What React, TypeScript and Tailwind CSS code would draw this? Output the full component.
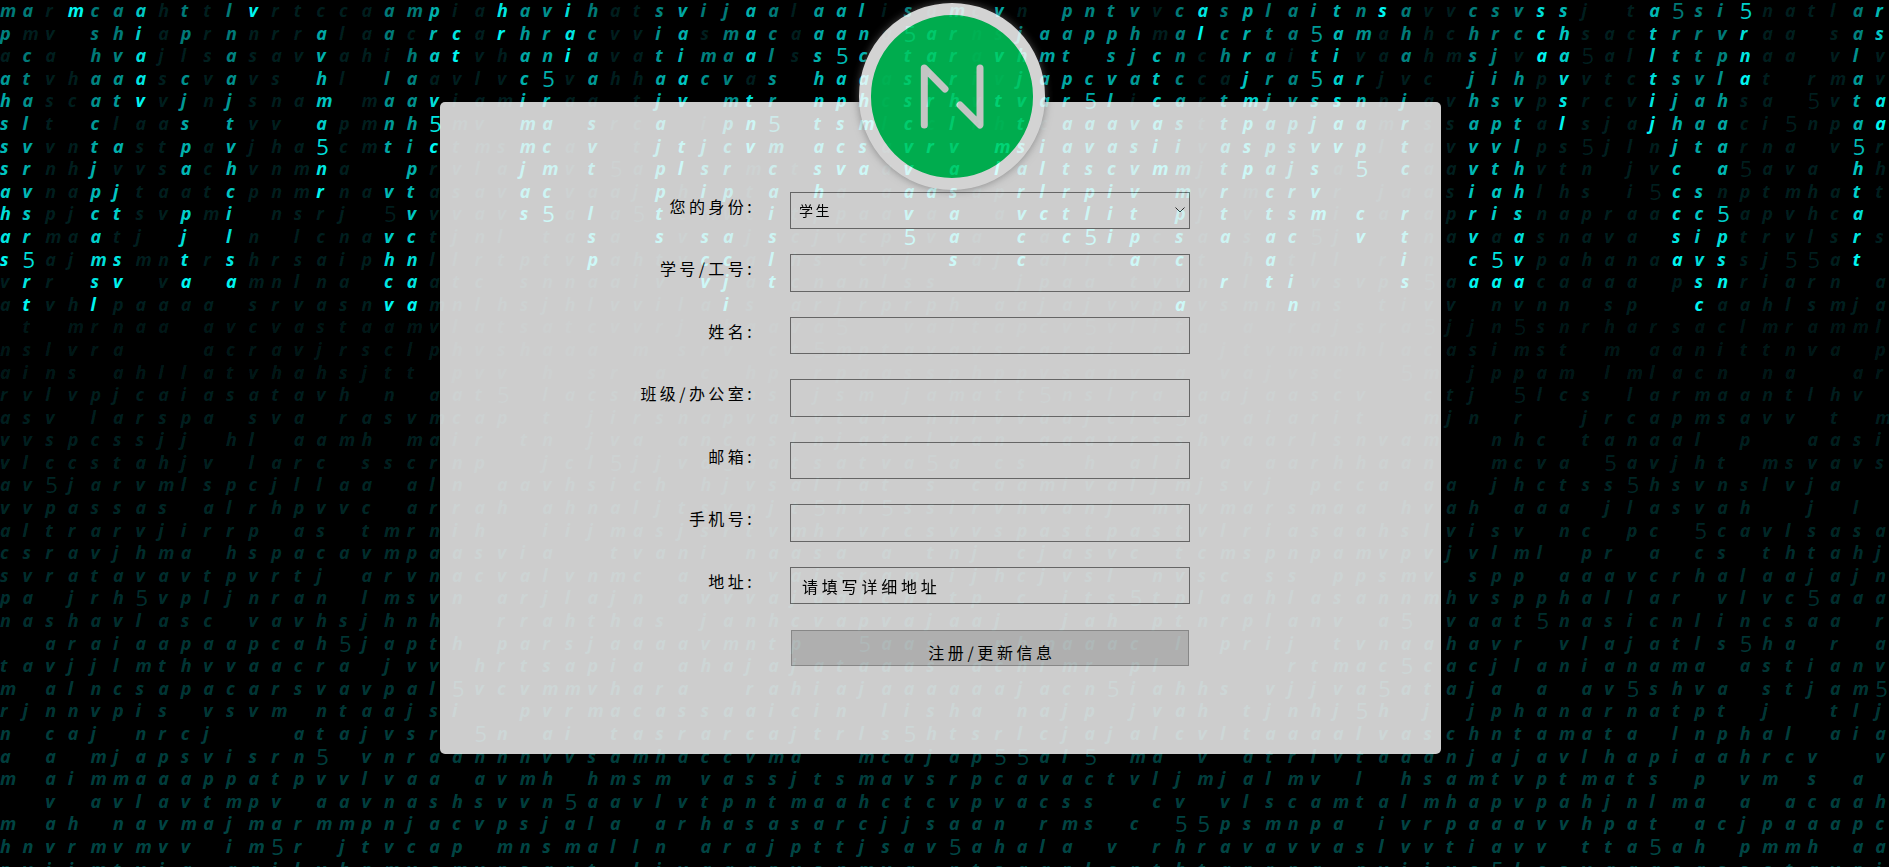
import { useMemo } from 'react';

const LETTERS = 'aaaaaaaaccsssttmmnnhhjjpprrvvvvlli5';
const COLS = 84;
const ROWS = 39;

// bright trails at the top of the rain, column -> letters top down ('.' = old dim letter)
const TRAILS: Record<number, string> = {
  0: 'mp.ahsssahas', 1: 'a.ctalvrvsr5rt', 3: 'm', 4: 'cshaactjpcamsl', 5: 'ahvat.a.jt.sv', 6: 'aiaav',
  8: 'tp.cjspa.pjta', 10: 'lnaajtvhcilsa', 11: 'v', 14: '.avhma5nr', 17: 'aa.lant.v.vhcv', 18: 'm.haahiptvcnaa',
  19: 'pra.v5c', 20: '.ct', 22: 'hr', 23: 'ahacimmjas', 24: 'vrn5racmc5', 25: 'iai', 26: 'hcaa.svt.lsp',
  29: 'sitajajppts', 30: 'vaiav.tl', 31: 'i.mc..jsi.scv', 32: 'jmavmpcrp.acji', 33: 'aaa.tnv', 34: 'aclsr5mcaislt',
  36: 'aashntash', 37: 'aa5apscv', 38: 'lncahmsa', 40: 's5tsscvvav5', 41: '.aa.r.r.a', 42: 'mrrrhlvasaas',
  44: 'v.v.t.ml', 45: '.jhjvtsarvcc', 46: '.amaa.illc', 47: 'patpraatrtc', 48: 'np.c5avspl5', 49: 'tpsvlaaciii',
  50: 'vhja.vsvvtpa', 51: '..ctcaim', 52: 'cancasimmpsc.a', 53: 'al', 54: 'sch.ttatrta.r', 55: 'prrjmpsp',
  56: 'ltarjapactaat', 57: 'aa.avpsjrsc.in', 58: 'i5t5sjvsvm', 59: 'taiasav', 60: 'nm.rnap5.cv', 61: 's',
  62: 'aha.jrtc.rtis', 65: 'chsjhavvirvca', 66: 'srjispvtai.5a', 67: 'vc.hvtlhhsava', 68: 'sca', 69: 'shavsl',
  73: 'atltij', 74: '5rtsjhjcccsa', 75: 'srtvaat.scivsc', 76: 'ivplhaaa.5psn', 77: '5rna', 82: 'aalata5htart', 83: 'rs..aa',
};

function makeRand(seed: number) {
  return () => {
    seed = (seed + 0x6d2b79f5) | 0;
    let t = Math.imul(seed ^ (seed >>> 15), 1 | seed);
    t = (t + Math.imul(t ^ (t >>> 7), 61 | t)) ^ t;
    return ((t ^ (t >>> 14)) >>> 0) / 4294967296;
  };
}

function buildRain() {
  const rand = makeRand(20);
  const rows = [];
  for (let r = 0; r < ROWS; r++) {
    const cells = [];
    for (let c = 0; c < COLS; c++) {
      const trail = TRAILS[c];
      const bright = trail && trail[r] && trail[r] !== '.' ? trail[r] : null;
      if (bright) {
        const alpha = Math.max(0.5, 1 - (trail.length - 1 - r) * 0.045);
        cells.push({ ch: bright, alpha });
        continue;
      }
      const pick = LETTERS[Math.floor(rand() * LETTERS.length)];
      const blank = rand() < 0.12;
      const alpha = r < 14 ? 0.13 : 0.1 + ((r - 14) / 25) * 0.21;
      cells.push({ ch: blank ? '' : pick, alpha });
    }
    rows.push(cells);
  }
  return rows;
}

function MatrixRain() {
  const rows = useMemo(buildRain, []);
  return (
    <div className="absolute inset-0 overflow-hidden bg-black font-['Open_Sans',sans-serif] text-[18px] font-bold italic leading-[21px]">
      {rows.map((cells, r) => (
        <div key={r} className="flex h-[22.6px] w-[1900px]">
          {cells.map((cell, c) => (
            <span
              key={c}
              className={`block w-[22.6px] shrink-0 ${cell.ch === '5' ? 'text-[22px] font-normal not-italic' : ''}`}
              style={{ color: `rgba(0,245,240,${cell.alpha})` }}
            >
              {cell.ch}
            </span>
          ))}
        </div>
      ))}
    </div>
  );
}

function Logo() {
  return (
    <div className="absolute left-[419px] top-[-99px] flex h-[187px] w-[186px] items-center justify-center rounded-full border-[12px] border-white bg-[#00d05f] shadow-[0_0_8px_rgba(125,125,125,0.7)]">
      <svg viewBox="0 0 162 163" className="h-full w-full" fill="none" stroke="#eceeec" strokeWidth="7" strokeLinecap="round" strokeLinejoin="round">
        <path d="M53.3 110V53L74 74" />
        <path d="M89 90L109 110V53" />
      </svg>
    </div>
  );
}

function Row({ label, children }: { label: string; children: React.ReactNode }) {
  return (
    <div className="flex h-[37.5px]">
      <label className="w-[315px] text-right text-[16px] leading-[28px] tracking-[3.4px] text-black">{label}</label>
      <div className="relative ml-[35px] w-[400px]">{children}</div>
    </div>
  );
}

const fieldClass = 'block h-full w-full border border-[#7a7a7a] bg-transparent text-black outline-none';

export default function App() {
  return (
    <div className="relative h-screen overflow-hidden bg-black font-['Noto_Sans_CJK_SC','Noto_Sans',sans-serif]">
      <MatrixRain />
      <div className="relative flex justify-center pt-[102px]">
        <div className="relative ml-[-8px] h-[652px] w-[1001px] rounded-[5px] bg-[#f8f8f8] pt-[89.75px] opacity-[0.83]">
          <Logo />
          <form className="flex flex-col gap-[25px]">
            <Row label="您的身份:">
              <select className={`${fieldClass} appearance-none pl-[8px] text-[14px] tracking-[2.4px]`} defaultValue="学生">
                <option>学生</option>
                <option>教师</option>
              </select>
              <svg viewBox="0 0 10 6" className="pointer-events-none absolute right-[5px] top-[15px] h-[6px] w-[10px]" fill="none" stroke="#333" strokeWidth="1">
                <path d="M0.5 0.5L5 5L9.5 0.5" />
              </svg>
            </Row>
            <Row label="学号/工号:">
              <input className={fieldClass} />
            </Row>
            <Row label="姓名:">
              <input className={fieldClass} />
            </Row>
            <Row label="班级/办公室:">
              <input className={fieldClass} />
            </Row>
            <Row label="邮箱:">
              <input className={fieldClass} />
            </Row>
            <Row label="手机号:">
              <input className={fieldClass} />
            </Row>
            <Row label="地址:">
              <input className={`${fieldClass} pl-[11px] text-[16px] tracking-[3.8px]`} defaultValue="请填写详细地址" />
            </Row>
            <div className="ml-[351px] mt-[1px] w-[398px]">
              <button
                type="button"
                className="block h-[35.5px] w-full border border-[#a4a4a4] bg-[#d4d4d4] pl-[4px] pt-[7px] text-center text-[16px] leading-[28px] tracking-[3.6px] text-black"
              >
                注册/更新信息
              </button>
            </div>
          </form>
        </div>
      </div>
    </div>
  );
}
